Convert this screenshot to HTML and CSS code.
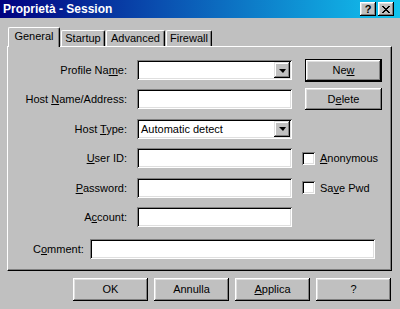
FILE: index.html
```html
<!DOCTYPE html>
<html lang="it">
<head>
  <meta charset="UTF-8">
  <title>Proprietà - Session</title>
  <link rel="stylesheet" href="styles.css">
</head>
<body>
  <div class="window">
    <div class="titlebar">
      <span class="title">Proprietà - Session</span>
      <div class="title-buttons">
        <span class="tbtn help">?</span>
        <span class="tbtn close">
          <svg width="8" height="7" viewBox="0 0 8 7"><path d="M0 0h2v1h1v1h2v-1h1v-1h2v1h-1v1h-1v1h-1v1h1v1h1v1h1v1h-2v-1h-1v-1h-2v1h-1v1h-2v-1h1v-1h1v-1h1v-1h-1v-1h-1v-1h-1z" fill="#000"/></svg>
        </span>
      </div>
    </div>

    <div class="tabs">
      <div class="tab active">General</div>
      <div class="tab tab-startup">Startup</div>
      <div class="tab tab-advanced">Advanced</div>
      <div class="tab tab-firewall">Firewall</div>
    </div>

    <div class="panel">
      <div class="form">
        <label>Profile Na<u>m</u>e:</label>
        <div class="field combo"><span class="value"></span><span class="drop"></span></div>
        <button class="btn default">Ne<u>w</u></button>

        <label>Host <u>N</u>ame/Address:</label>
        <div class="field"></div>
        <button class="btn">D<u>e</u>lete</button>

        <label>Host <u>T</u>ype:</label>
        <div class="field combo"><span class="value">Automatic detect</span><span class="drop"></span></div>
        <div></div>

        <label><u>U</u>ser ID:</label>
        <div class="field"></div>
        <div class="check"><span class="box"></span><span><u>A</u>nonymous</span></div>

        <label><u>P</u>assword:</label>
        <div class="field"></div>
        <div class="check"><span class="box"></span><span>Sa<u>v</u>e Pwd</span></div>

        <label>A<u>c</u>count:</label>
        <div class="field"></div>
        <div></div>
      </div>

      <div class="comment-row">
        <label>C<u>o</u>mment:</label>
        <div class="field"></div>
      </div>
    </div>

    <div class="footer">
      <button class="btn">OK</button>
      <button class="btn">Annulla</button>
      <button class="btn"><u>A</u>pplica</button>
      <button class="btn">?</button>
    </div>
  </div>
</body>
</html>
```

FILE: styles.css
```css
body {
  margin: 0;
  font-family: 'Liberation Sans', Arial, sans-serif;
  font-size: 11px;
  color: #000;
}

.window {
  width: 400px;
  height: 309px;
  background: #c0c0c0;
  overflow: hidden;
}

.titlebar {
  height: 18px;
  display: flex;
  align-items: center;
  justify-content: space-between;
  background: linear-gradient(to right, #000080 0%, #0a4fb0 40%, #12c4ef 100%);
  padding: 0 6px 0 3px;
}

.title {
  color: #fff;
  font-weight: bold;
  font-size: 12px;
  line-height: 18px;
}

.title-buttons {
  display: flex;
  gap: 2px;
}

.tbtn {
  width: 16px;
  height: 14px;
  background: #c0c0c0;
  display: flex;
  align-items: center;
  justify-content: center;
  box-shadow: inset -1px -1px #000, inset 1px 1px #fff, inset -2px -2px #808080, inset 2px 2px #dfdfdf;
  box-sizing: border-box;
}

.tbtn.help {
  font-weight: bold;
  font-size: 11px;
  line-height: 14px;
}

.tabs {
  display: flex;
  align-items: flex-end;
  height: 19px;
  margin: 9px 0 0 8px;
}

.tab {
  height: 16px;
  line-height: 15px;
  text-align: center;
  box-sizing: border-box;
  background: #c0c0c0;
  border-top: 1px solid #fff;
  border-left: 1px solid #fff;
  border-right: 1px solid #000;
  border-radius: 2px 2px 0 0;
  box-shadow: inset -1px 0 #808080;
  margin-left: 1px;
}

.tab.active {
  height: 20px;
  width: 52px;
  margin-left: 0;
  margin-bottom: -1px;
  line-height: 17px;
  position: relative;
  z-index: 1;
}

.tab-startup { width: 44px; }
.tab-advanced { width: 59px; }
.tab-firewall { width: 46px; }

.panel {
  margin-left: 7px;
  width: 385px;
  box-sizing: border-box;
  border-top: 1px solid #fff;
  border-left: 1px solid #fff;
  border-right: 1px solid #000;
  border-bottom: 1px solid #000;
  box-shadow: inset -1px -1px #808080;
  padding: 13px 0 11px 0;
}

.form {
  display: grid;
  grid-template-columns: 119px 155px 80px;
  grid-auto-rows: 20px;
  column-gap: 10px;
  row-gap: 9.4px;
  align-items: center;
}

.form label {
  text-align: right;
}

u {
  text-decoration: underline;
  text-underline-offset: 1px;
}

.field {
  height: 20px;
  box-sizing: border-box;
  background: #fff;
  box-shadow: inset 1px 1px #808080, inset -1px -1px #fff, inset 2px 2px #000, inset -2px -2px #dfdfdf;
}

.combo {
  display: flex;
  align-items: center;
  padding: 2px 2px 2px 4px;
}

.combo .value {
  flex: 1;
}

.drop {
  width: 16px;
  height: 16px;
  box-sizing: border-box;
  background: #c0c0c0;
  box-shadow: inset -1px -1px #000, inset 1px 1px #dfdfdf, inset -2px -2px #808080, inset 2px 2px #fff;
  display: flex;
  align-items: center;
  justify-content: center;
}

.drop::after {
  content: "";
  border-left: 4px solid transparent;
  border-right: 3px solid transparent;
  border-top: 4px solid #000;
  margin-top: 1px;
}

.btn {
  font-family: inherit;
  font-size: 11px;
  color: #000;
  background: #c0c0c0;
  border: none;
  padding: 0;
  height: 22px;
  box-sizing: border-box;
  box-shadow: inset -1px -1px #000, inset 1px 1px #fff, inset -2px -2px #808080, inset 2px 2px #dfdfdf;
}

.form .btn {
  width: 77px;
  margin-left: 3px;
}

.btn.default {
  border: 1px solid #000;
  height: 23px;
}

.check {
  display: flex;
  align-items: center;
  gap: 5px;
}

.box {
  width: 13px;
  height: 13px;
  box-sizing: border-box;
  background: #fff;
  box-shadow: inset 1px 1px #808080, inset -1px -1px #fff, inset 2px 2px #000, inset -2px -2px #dfdfdf;
}

.comment-row {
  display: grid;
  grid-template-columns: 57px 285px;
  align-items: center;
  margin: 12px 0 0 25px;
}

.footer {
  display: flex;
  gap: 6px;
  margin: 7px 0 0 73px;
}

.footer .btn {
  width: 75px;
  height: 23px;
}
```
